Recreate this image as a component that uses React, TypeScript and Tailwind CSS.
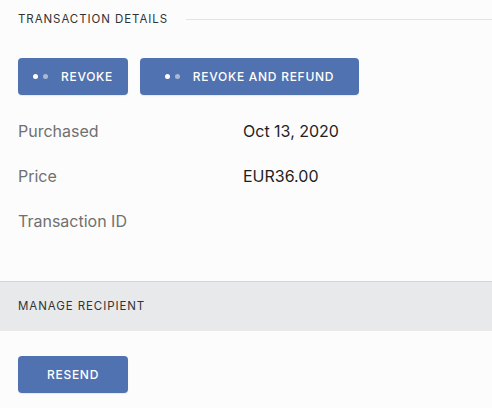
import React from "react";

const font = { fontFamily: "Inter, 'Liberation Sans', sans-serif" };

function Dots() {
  return (
    <span className="flex items-center gap-[5px]">
      <span className="h-[5px] w-[5px] rounded-full bg-white" />
      <span className="h-[5px] w-[5px] rounded-full bg-white/50" />
    </span>
  );
}

function ActionButton({ label, dots = true, width }: { label: string; dots?: boolean; width: string }) {
  return (
    <button
      className={`flex h-[37px] ${width} items-center justify-center gap-[13px] rounded-[4px] bg-[#5072b0] text-[12px] font-medium tracking-[0.06em] text-white shadow-[0_1px_1px_rgba(0,0,0,0.08)]`}
    >
      {dots && <Dots />}
      <span>{label}</span>
    </button>
  );
}

const rows = [
  { label: "Purchased", value: "Oct 13, 2020" },
  { label: "Price", value: "EUR36.00" },
  { label: "Transaction ID", value: "" },
];

export default function App() {
  return (
    <div className="min-h-[408px] w-[492px] bg-[#fcfcfd] text-[#222]" style={font}>
      <section className="pl-[18px]">
        <div className="flex items-center gap-[18px] pt-[11px]">
          <h2 className="text-[11.5px] tracking-[0.08em] text-[#333]">TRANSACTION DETAILS</h2>
          <div className="h-px flex-1 bg-[#e4e4e6]" />
        </div>

        <div className="mt-[30px] flex gap-[12px]">
          <ActionButton label="REVOKE" width="w-[110px]" />
          <ActionButton label="REVOKE AND REFUND" width="w-[219px]" />
        </div>

        <dl className="mt-[24px] pb-[27px]">
          {rows.map((r) => (
            <div key={r.label} className="flex h-[45px] items-start text-[16px]">
              <dt className="w-[225px] text-[#707070]">{r.label}</dt>
              <dd className="text-[#1f1f1f]">{r.value}</dd>
            </div>
          ))}
        </dl>
      </section>

      <div className="flex h-[50px] items-center border-t border-[#d6d6d8] bg-[#e8e9ea] pl-[18px]">
        <h2 className="text-[11.5px] tracking-[0.08em] text-[#333]">MANAGE RECIPIENT</h2>
      </div>

      <div className="pl-[18px] pt-[25px]">
        <ActionButton label="RESEND" dots={false} width="w-[110px]" />
      </div>
    </div>
  );
}
